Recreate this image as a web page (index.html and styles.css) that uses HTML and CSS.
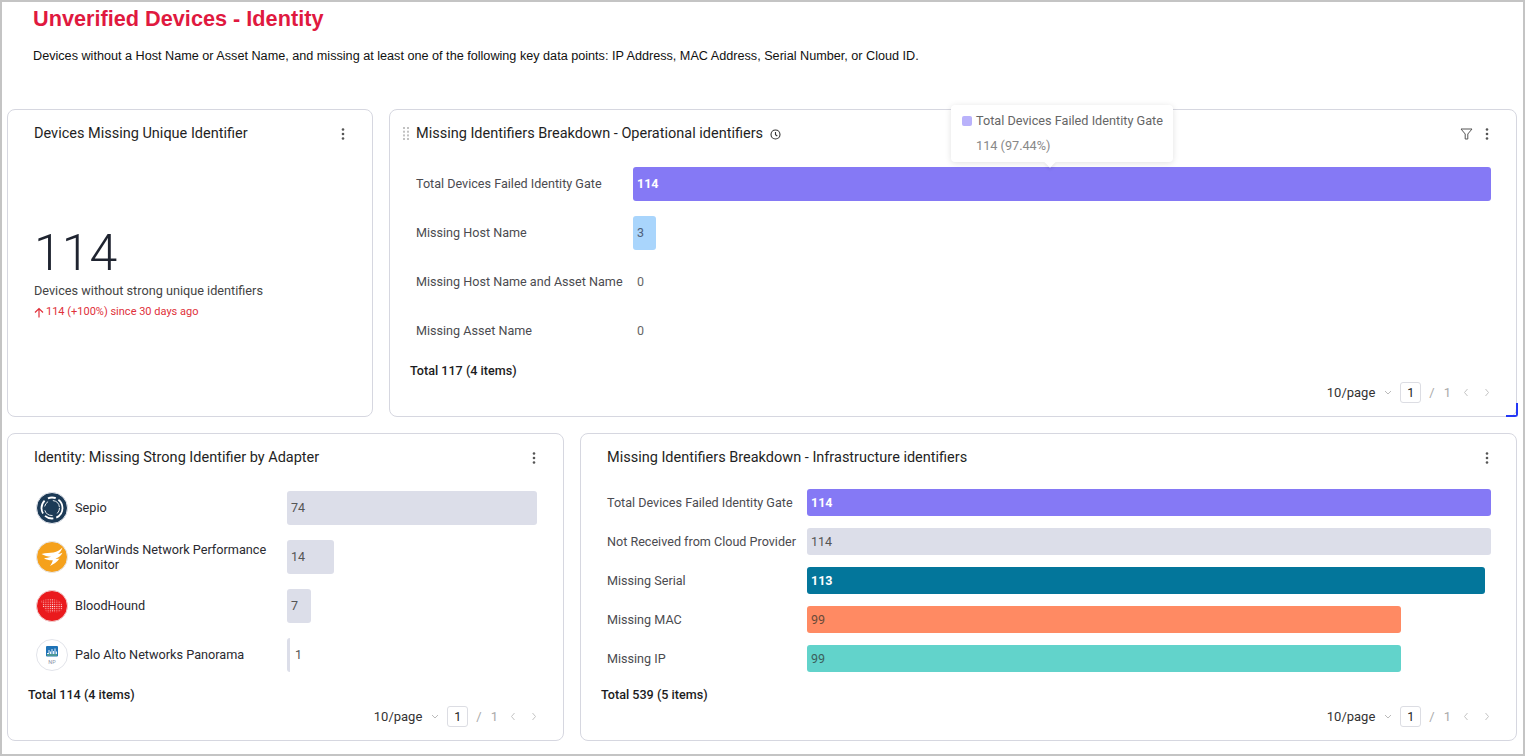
FILE: index.html
```html
<!DOCTYPE html>
<html>
<head>
<meta charset="utf-8">
<link rel="stylesheet" href="styles.css">
</head>
<body>
<div class="frame">
  <header class="page-head">
    <h1 class="page-title">Unverified Devices - Identity</h1>
    <p class="page-desc">Devices without a Host Name or Asset Name, and missing at least one of the following key data points: IP Address, MAC Address, Serial Number, or Cloud ID.</p>
  </header>

  <div class="row row-top">
    <section class="card card-kpi">
      <div class="card-head">
        <span class="card-title">Devices Missing Unique Identifier</span>
        <span class="head-icons">
          <svg class="kebab" width="4" height="14" viewBox="0 0 4 14"><circle cx="2" cy="2.5" r="1.3"/><circle cx="2" cy="7" r="1.3"/><circle cx="2" cy="11.5" r="1.3"/></svg>
        </span>
      </div>
      <div class="kpi-value">114</div>
      <div class="kpi-label">Devices without strong unique identifiers</div>
      <div class="kpi-trend">
        <svg width="10" height="11" viewBox="0 0 10 11"><path d="M5 10.5V1.5M1 5.5L5 1.5L9 5.5" fill="none" stroke="#e0303a" stroke-width="1.2"/></svg>
        <span>114 (+100%) since 30 days ago</span>
      </div>
    </section>

    <section class="card card-ops">
      <div class="card-head">
        <svg class="drag" width="6" height="13" viewBox="0 0 6 13"><g fill="#c2c2c2"><rect x="0" y="0" width="2" height="2"/><rect x="4" y="0" width="2" height="2"/><rect x="0" y="3.7" width="2" height="2"/><rect x="4" y="3.7" width="2" height="2"/><rect x="0" y="7.4" width="2" height="2"/><rect x="4" y="7.4" width="2" height="2"/><rect x="0" y="11" width="2" height="2"/><rect x="4" y="11" width="2" height="2"/></g></svg>
        <span class="card-title">Missing Identifiers Breakdown - Operational identifiers</span>
        <svg class="clock" width="11" height="11" viewBox="0 0 11 11"><circle cx="5.5" cy="5.5" r="4.5" fill="none" stroke="#333" stroke-width="1.1"/><path d="M5.5 3V5.7L7.3 7" fill="none" stroke="#333" stroke-width="1.1"/></svg>
        <span class="head-icons">
          <svg class="filter" width="13" height="12" viewBox="0 0 13 12"><path d="M1 1H12L7.8 6V11H5.2V6Z" fill="none" stroke="#555" stroke-width="1"/></svg>
          <svg class="kebab" width="4" height="14" viewBox="0 0 4 14"><circle cx="2" cy="2.5" r="1.3"/><circle cx="2" cy="7" r="1.3"/><circle cx="2" cy="11.5" r="1.3"/></svg>
        </span>
      </div>
      <div class="chart chart-ops">
        <div class="brow"><span class="blabel">Total Devices Failed Identity Gate</span><span class="btrack"><span class="bar c-purple" style="width:100%">114</span></span></div>
        <div class="brow"><span class="blabel">Missing Host Name</span><span class="btrack"><span class="bar c-sky" style="width:2.63%">3</span></span></div>
        <div class="brow"><span class="blabel">Missing Host Name and Asset Name</span><span class="btrack"><span class="bar c-none">0</span></span></div>
        <div class="brow"><span class="blabel">Missing Asset Name</span><span class="btrack"><span class="bar c-none">0</span></span></div>
      </div>
      <div class="total">Total 117 (4 items)</div>
      <div class="pager">
        <span class="pp">10/page</span>
        <svg class="chev-d" width="8" height="5" viewBox="0 0 8 5"><path d="M1 1L4 4L7 1" fill="none" stroke="#bbb" stroke-width="1"/></svg>
        <span class="pbox">1</span>
        <span class="pslash">/</span>
        <span class="pmax">1</span>
        <svg class="chev" width="6" height="9" viewBox="0 0 6 9"><path d="M4.5 1L1.5 4.5L4.5 8" fill="none" stroke="#c4c4c4" stroke-width="1"/></svg>
        <svg class="chev" width="6" height="9" viewBox="0 0 6 9"><path d="M1.5 1L4.5 4.5L1.5 8" fill="none" stroke="#c4c4c4" stroke-width="1"/></svg>
      </div>
      <div class="tooltip">
        <div class="tt-name"><span class="tt-swatch"></span>Total Devices Failed Identity Gate</div>
        <div class="tt-val">114 (97.44%)</div>
      </div>
      <span class="resize"></span>
    </section>
  </div>

  <div class="row row-bottom">
    <section class="card card-adapter">
      <div class="card-head">
        <span class="card-title">Identity: Missing Strong Identifier by Adapter</span>
        <span class="head-icons">
          <svg class="kebab" width="4" height="14" viewBox="0 0 4 14"><circle cx="2" cy="2.5" r="1.3"/><circle cx="2" cy="7" r="1.3"/><circle cx="2" cy="11.5" r="1.3"/></svg>
        </span>
      </div>
      <div class="chart chart-adapter">
        <div class="arow">
          <span class="alabel">
            <svg class="logo" width="32" height="32" viewBox="0 0 32 32">
              <circle cx="16" cy="16" r="15.5" fill="#1c3a56" stroke="#e6e8ee" stroke-width="1"/>
              <circle cx="16" cy="16" r="10.5" fill="none" stroke="#fff" stroke-width="1.8" stroke-dasharray="12 3 9 3 14 4 8 3"/>
              <circle cx="16" cy="16" r="7.5" fill="none" stroke="#fff" stroke-width="0.9" stroke-dasharray="6 5 10 4"/>
            </svg>
            <span class="aname">Sepio</span>
          </span>
          <span class="atrack"><span class="abar" style="width:100%">74</span></span>
        </div>
        <div class="arow">
          <span class="alabel">
            <svg class="logo" width="32" height="32" viewBox="0 0 32 32">
              <circle cx="16" cy="16" r="15.5" fill="#f5a11c" stroke="#e6e8ee" stroke-width="1"/>
              <path d="M5.5 13C10 11.5 14 12 17.5 11.5C21 10.8 24 9 26.5 6.5C25.5 9.5 24 11.5 22 12.8C24 12.8 25.5 12.3 26.5 11.8C25 14.8 22.5 16.8 19.5 17.6C21 18 22.5 17.9 23.5 17.6C21 21 17.5 23.5 14 25C15.5 23 16.5 21 16.8 19.3C13.5 19.5 10.5 18.8 8 17.3C10.5 17 12.8 16.6 15 15.8C11.5 15.6 8.3 14.6 5.5 13Z" fill="#fff"/>
            </svg>
            <span class="aname">SolarWinds Network Performance Monitor</span>
          </span>
          <span class="atrack"><span class="abar" style="width:18.92%">14</span></span>
        </div>
        <div class="arow">
          <span class="alabel">
            <svg class="logo" width="32" height="32" viewBox="0 0 32 32">
              <defs><pattern id="bhdots" width="2.2" height="2.2" patternUnits="userSpaceOnUse"><circle cx="1.1" cy="1.1" r="0.55" fill="#fff"/></pattern></defs>
              <circle cx="16" cy="16" r="15.5" fill="#ea1a1d" stroke="#f0d0d0" stroke-width="1"/>
              <path d="M5 11C9 9 14 8.5 19 9.5C23 10 26 12 26.5 16C27 20 24 22.5 20 22.5L17 22L13 23L10 22L9 19L7 17L6.5 14Z" fill="url(#bhdots)"/>
            </svg>
            <span class="aname">BloodHound</span>
          </span>
          <span class="atrack"><span class="abar" style="width:9.46%">7</span></span>
        </div>
        <div class="arow">
          <span class="alabel">
            <svg class="logo" width="32" height="32" viewBox="0 0 32 32">
              <circle cx="16" cy="16" r="15.5" fill="#fff" stroke="#e2e4ea" stroke-width="1"/>
              <rect x="10" y="7" width="12" height="10.5" rx="1" fill="#1f73b7"/>
              <path d="M11 14.5H13M13 14.5V11M14.5 15V12.5M16 15V10M17.5 15V12M19 15V9.5M20.5 15V12.5" stroke="#fff" stroke-width="0.9"/>
              <path d="M11 16H21" stroke="#7cc06e" stroke-width="1"/>
              <text x="16" y="24.5" text-anchor="middle" class="np">NP</text>
            </svg>
            <span class="aname">Palo Alto Networks Panorama</span>
          </span>
          <span class="atrack"><span class="abar thin" style="width:1.35%">1</span></span>
        </div>
      </div>
      <div class="total">Total 114 (4 items)</div>
      <div class="pager">
        <span class="pp">10/page</span>
        <svg class="chev-d" width="8" height="5" viewBox="0 0 8 5"><path d="M1 1L4 4L7 1" fill="none" stroke="#bbb" stroke-width="1"/></svg>
        <span class="pbox">1</span>
        <span class="pslash">/</span>
        <span class="pmax">1</span>
        <svg class="chev" width="6" height="9" viewBox="0 0 6 9"><path d="M4.5 1L1.5 4.5L4.5 8" fill="none" stroke="#c4c4c4" stroke-width="1"/></svg>
        <svg class="chev" width="6" height="9" viewBox="0 0 6 9"><path d="M1.5 1L4.5 4.5L1.5 8" fill="none" stroke="#c4c4c4" stroke-width="1"/></svg>
      </div>
    </section>

    <section class="card card-infra">
      <div class="card-head">
        <span class="card-title">Missing Identifiers Breakdown - Infrastructure identifiers</span>
        <span class="head-icons">
          <svg class="kebab" width="4" height="14" viewBox="0 0 4 14"><circle cx="2" cy="2.5" r="1.3"/><circle cx="2" cy="7" r="1.3"/><circle cx="2" cy="11.5" r="1.3"/></svg>
        </span>
      </div>
      <div class="chart chart-infra">
        <div class="brow"><span class="blabel">Total Devices Failed Identity Gate</span><span class="btrack"><span class="bar c-purple" style="width:100%">114</span></span></div>
        <div class="brow"><span class="blabel">Not Received from Cloud Provider</span><span class="btrack"><span class="bar c-gray" style="width:100%">114</span></span></div>
        <div class="brow"><span class="blabel">Missing Serial</span><span class="btrack"><span class="bar c-teal" style="width:99.12%">113</span></span></div>
        <div class="brow"><span class="blabel">Missing MAC</span><span class="btrack"><span class="bar c-orange" style="width:86.84%">99</span></span></div>
        <div class="brow"><span class="blabel">Missing IP</span><span class="btrack"><span class="bar c-cyan" style="width:86.84%">99</span></span></div>
      </div>
      <div class="total">Total 539 (5 items)</div>
      <div class="pager">
        <span class="pp">10/page</span>
        <svg class="chev-d" width="8" height="5" viewBox="0 0 8 5"><path d="M1 1L4 4L7 1" fill="none" stroke="#bbb" stroke-width="1"/></svg>
        <span class="pbox">1</span>
        <span class="pslash">/</span>
        <span class="pmax">1</span>
        <svg class="chev" width="6" height="9" viewBox="0 0 6 9"><path d="M4.5 1L1.5 4.5L4.5 8" fill="none" stroke="#c4c4c4" stroke-width="1"/></svg>
        <svg class="chev" width="6" height="9" viewBox="0 0 6 9"><path d="M1.5 1L4.5 4.5L1.5 8" fill="none" stroke="#c4c4c4" stroke-width="1"/></svg>
      </div>
    </section>
  </div>
</div>
</body>
</html>
```
FILE: styles.css
```css
* { box-sizing: border-box; }
html, body { margin: 0; padding: 0; background: #fff; }
body { font-family: Roboto, "Liberation Sans", Arial, sans-serif; color: #222; }

.frame {
  width: 1525px;
  height: 756px;
  border: 2px solid #c4c4c4;
  padding: 0 6px 0 5px;
  background: #fff;
  overflow: hidden;
}

.page-head { padding: 5px 0 0 26px; height: 107px; }
.page-title {
  margin: 0;
  font-family: "Liberation Sans", Arial, sans-serif;
  font-weight: 700;
  font-size: 21.7px;
  line-height: 24px;
  color: #e0193f;
}
.page-desc {
  margin: 17px 0 0;
  font-family: "Liberation Sans", Arial, sans-serif;
  font-size: 12.65px;
  line-height: 16px;
  color: #111;
}

.row { display: flex; gap: 16px; height: 308px; }
.row-bottom { margin-top: 16px; }

.card {
  position: relative;
  display: flex;
  flex-direction: column;
  border: 1px solid #d6d7e0;
  border-radius: 8px;
  background: #fff;
  height: 308px;
}
.card-kpi { width: 366px; }
.card-ops { width: 1128px; }
.card-adapter { width: 557px; }
.card-infra { width: 937px; }

.card-head {
  display: flex;
  align-items: center;
  height: 47px;
  padding: 0 0 0 26px;
  flex: 0 0 47px;
}
.card-title { font-size: 14.5px; color: #1f1f24; white-space: nowrap; }
.card-ops .card-head { padding-left: 13px; }
.drag { margin-right: 7px; }
.clock { margin-left: 7px; margin-top: 1px; }
.head-icons {
  margin-left: auto;
  display: flex;
  align-items: center;
  gap: 12px;
  padding-right: 27px;
}
.kebab { fill: #555; }

/* KPI */
.kpi-value {
  margin: 67px 0 0 26px;
  font-size: 50px;
  font-weight: 300;
  line-height: 59px;
  color: #1f2430;
}
.kpi-label { margin-left: 26px; font-size: 12.7px; line-height: 16px; color: #444; }
.kpi-trend {
  margin: 6px 0 0 26px;
  display: flex;
  align-items: center;
  gap: 2px;
  font-size: 11px;
  line-height: 14px;
  color: #e0303a;
}

/* bar charts */
.chart { flex: 0 0 205px; padding: 2px 25px 0 26px; }
.brow { display: flex; align-items: center; }
.chart-ops .brow { height: 49px; }
.chart-infra .brow { height: 39px; }
.blabel { font-size: 12.6px; color: #4b4b50; white-space: nowrap; }
.chart-ops .blabel { width: 217px; }
.chart-infra .blabel { width: 200px; }
.btrack { flex: 1; display: flex; }
.bar {
  display: flex;
  align-items: center;
  padding-left: 4px;
  font-size: 12.5px;
  color: #555;
  border-radius: 3px;
  white-space: nowrap;
}
.chart-ops .bar { height: 34px; }
.chart-infra .bar { height: 27px; }
.c-purple { background: #8579f5; color: #fff; font-weight: 700; }
.c-teal { background: #03769b; color: #fff; font-weight: 700; }
.c-sky { background: #a9d5fc; color: #50607a; }
.c-gray { background: #dcdee9; }
.c-orange { background: #ff8a63; color: #6a4a3a; }
.c-cyan { background: #62d3cb; color: #3c5f5c; }
.c-none { background: transparent; color: #666; }

/* adapter chart */
.chart-adapter { padding-left: 28px; padding-right: 26px; }
.arow { display: flex; align-items: center; height: 49px; }
.alabel { display: flex; align-items: center; width: 251px; gap: 7px; }
.logo { flex: 0 0 32px; }
.aname { font-size: 12.7px; line-height: 15px; color: #2a2a30; max-width: 200px; }
.np { font-family: Roboto, sans-serif; font-size: 5.5px; fill: #8a94a6; }
.atrack { flex: 1; display: flex; }
.abar {
  height: 34px;
  display: flex;
  align-items: center;
  padding-left: 4px;
  background: #dcdee9;
  border-radius: 3px;
  font-size: 12.5px;
  color: #555;
  white-space: nowrap;
}
.abar.thin { padding-left: 8px; background: linear-gradient(to right, #dcdee9 0 3px, transparent 3px); }

.total {
  padding-left: 20px;
  margin-top: 1px;
  font-size: 12.6px;
  line-height: 16px;
  font-weight: 500;
  color: #1c1c22;
}

.pager {
  display: flex;
  align-items: center;
  justify-content: flex-end;
  height: 22px;
  margin-top: 2px;
  padding-right: 26px;
  font-size: 13px;
  color: #333;
}
.pp { margin-right: 9px; }
.chev-d { margin-right: 8px; }
.pbox {
  width: 21px;
  height: 21px;
  border: 1px solid #dcdde3;
  border-radius: 3px;
  display: flex;
  align-items: center;
  justify-content: center;
  font-size: 12.5px;
  color: #222;
}
.pslash { margin-left: 8px; color: #aaa; }
.pmax { margin-left: 9px; color: #aaa; }
.chev { margin-left: 12px; }
.chev:last-child { margin-left: 15px; }

/* tooltip */
.tooltip {
  position: absolute;
  left: 561px;
  top: -5px;
  width: 222px;
  height: 57px;
  background: #fff;
  border-radius: 4px;
  box-shadow: 0 1px 6px rgba(0,0,0,0.12);
  padding: 8px 0 0 11px;
  z-index: 3;
}
.tooltip::after {
  content: "";
  position: absolute;
  left: 95px;
  bottom: -4px;
  width: 8px;
  height: 8px;
  background: #fff;
  transform: rotate(45deg);
  box-shadow: 2px 2px 3px rgba(0,0,0,0.06);
}
.tt-name { display: flex; align-items: center; font-size: 12.7px; line-height: 15px; color: #666; }
.tt-swatch { width: 10px; height: 10px; border-radius: 2px; background: #b9b2fb; margin-right: 4px; }
.tt-val { margin: 10px 0 0 14px; font-size: 12.7px; line-height: 15px; color: #888; }

.resize {
  position: absolute;
  right: -2px;
  bottom: -1px;
  width: 12px;
  height: 14px;
  border-right: 2px solid #2438f5;
  border-bottom: 2px solid #2438f5;
  border-bottom-right-radius: 3px;
}
```
